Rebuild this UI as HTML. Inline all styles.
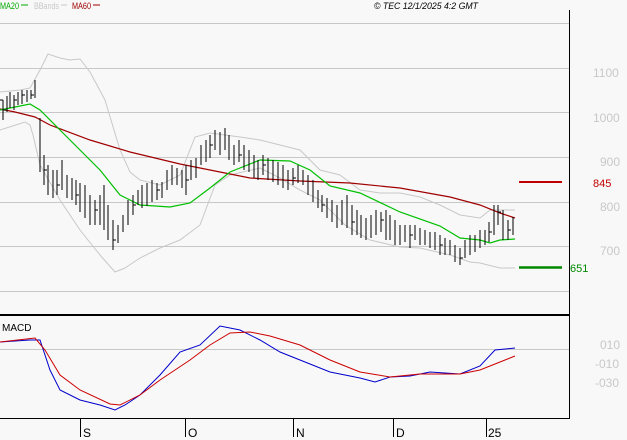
<!DOCTYPE html>
<html><head><style>
body{margin:0;background:#f8f8f8;}
svg{display:block;font-family:"Liberation Sans",sans-serif;}
</style></head><body>
<svg width="627" height="440" viewBox="0 0 627 440">
<rect width="627" height="440" fill="#f8f8f8"/>
<g stroke="#c8c8c8" stroke-width="1">
<line x1="0" y1="23.5" x2="569" y2="23.5"/>
<line x1="0" y1="68.5" x2="569" y2="68.5"/>
<line x1="0" y1="112.5" x2="569" y2="112.5"/>
<line x1="0" y1="157.5" x2="569" y2="157.5"/>
<line x1="0" y1="202.5" x2="569" y2="202.5"/>
<line x1="0" y1="246.5" x2="569" y2="246.5"/>
<line x1="0" y1="291.5" x2="569" y2="291.5"/>
<line x1="0" y1="349.5" x2="569" y2="349.5"/>
</g>
<g fill="#c8c8c8" font-size="12">
<text x="593" y="77">1100</text>
<text x="593" y="122">1000</text>
<text x="600" y="166">900</text>
<text x="600" y="211">800</text>
<text x="600" y="255">700</text>
<text x="600" y="349">010</text>
<text x="595" y="368">-010</text>
<text x="595" y="387">-030</text>
</g>
<polyline fill="none" stroke="#c8c8c8" points="0,92 20,90 30,88 40,70 48,54 60,58 70,60 80,59 90,72 105,100 120,150 130,172 140,180 160,185 180,175 195,137 210,133 240,137 260,140 280,145 300,150 320,170 340,175 360,190 380,193 400,193 420,197 440,205 460,215 480,218 490,210 500,210 515,210"/>
<polyline fill="none" stroke="#c8c8c8" points="0,130 25,122 30,125 33,135 40,165 60,200 80,230 100,255 115,272 125,268 140,258 160,248 180,240 200,225 215,185 230,175 260,168 280,178 300,190 320,200 345,225 370,240 400,247 420,248 450,255 470,262 480,263 500,268 515,268"/>
<polyline fill="none" stroke="#a00000" stroke-width="1.2" points="0,109 15,112 35,117 50,125 90,140 130,152 180,164 250,178 300,181 350,183 400,188 450,197 480,205 500,213 515,218"/>
<polyline fill="none" stroke="#00c000" stroke-width="1.2" points="0,110 30,104 40,110 60,130 80,150 100,170 120,195 140,205 170,207 190,203 210,188 230,172 260,160 290,161 310,170 330,186 360,193 400,212 440,226 460,238 480,240 490,243 500,240 515,239"/>
<path fill="none" stroke="#000" stroke-width="1" d="
M3,100V120M7,96V112M10,92V108M14,95V110M18,92V105M22,90V104M27,90V102M31,90V99M35,80V98
M40,118V172M44,155V185M48,165V195M53,170V198M57,170V195M62,160V190M67,175V198M72,178V200M76,180V205M80,183V212M85,185V218M90,195V225M95,200V225M100,195V225M104,185V230M108,205V240M113,220V250M118,225V243M123,215V232M128,200V225M133,195V215M138,190V205M142,185V208M147,183V206M152,180V202M157,183V200M162,182V198M167,170V190M172,165V185M177,168V185M182,170V188M186,165V195M191,160V180M196,158V178M201,145V165M206,140V162M210,135V158M215,130V150M220,132V155M225,128V150M229,135V160M234,145V165M239,140V162M244,145V170M249,150V172M254,155V178M258,160V180M263,155V175M268,158V180M273,160V182M278,162V185M283,165V188M288,170V190M293,168V185M298,165V183M303,170V185M308,175V195M313,180V202M318,190V208M322,195V212M327,198V218M332,200V222M337,205V228M342,200V225M347,195V228M352,205V235M357,210V235M361,215V238M366,218V240M371,215V238M376,210V235M381,212V232M386,210V240M390,215V240M395,220V245M400,225V245M405,225V242M410,225V248M415,225V240M420,228V245M425,230V245M430,232V248M435,232V250M440,235V255M445,238V255M450,240V255M455,245V262M460,248V265M465,240V258M470,235V255M475,235V252M480,230V248M485,230V245M489,222V242M494,205V235M498,205V225M503,210V240M508,220V240M513,217V235
"/>
<path fill="none" stroke="#000" d="M0,100h3M3,110h3M14,100h3M22,95h3M31,95h3M44,170h3M57,185h3M76,195h3M95,210h3M113,240h3M133,205h3M157,190h3M186,180h3M210,145h3M239,155h3M263,165h3M293,178h3M322,205h3M352,222h3M381,220h3M410,235h3M440,245h3M460,258h3M489,232h3M498,212h3M508,230h3"/>
<line x1="519" y1="182" x2="562" y2="182" stroke="#c00000" stroke-width="2"/>
<line x1="519" y1="267.5" x2="562" y2="267.5" stroke="#008800" stroke-width="2.5"/>
<text x="593" y="187" fill="#c00000" font-size="11">845</text>
<text x="570" y="272" fill="#008800" font-size="11">651</text>
<polyline fill="none" stroke="#0000cc" points="0,342 30,340 40,340 50,370 60,390 80,400 100,405 115,410 125,405 140,395 160,375 180,352 200,345 220,326 240,330 260,340 280,352 300,360 330,372 360,378 375,382 390,377 410,376 430,372 460,374 480,366 495,350 515,348"/>
<polyline fill="none" stroke="#cc0000" points="0,342 35,338 45,350 60,375 80,390 110,404 120,405 140,395 160,380 190,360 210,345 230,333 250,332 270,336 300,345 330,360 360,372 390,377 420,374 460,374 480,370 500,362 515,356"/>
<line x1="0" y1="315" x2="570" y2="315" stroke="#000" stroke-width="2"/>
<line x1="569.5" y1="10" x2="569.5" y2="419" stroke="#000"/>
<line x1="0" y1="418.5" x2="570" y2="418.5" stroke="#000"/>
<g stroke="#000"><line x1="80.5" y1="419" x2="80.5" y2="437"/><line x1="185.5" y1="419" x2="185.5" y2="437"/><line x1="293.5" y1="419" x2="293.5" y2="437"/><line x1="393.5" y1="419" x2="393.5" y2="437"/><line x1="486.5" y1="419" x2="486.5" y2="437"/></g>
<g font-size="12" fill="#000"><text x="83" y="437">S</text><text x="188" y="437">O</text><text x="296" y="437">N</text><text x="396" y="437">D</text><text x="488" y="437">25</text></g>
<g font-size="9"><text x="0" y="9" fill="#00aa00" textLength="19" lengthAdjust="spacingAndGlyphs">MA20</text><line x1="21" y1="5" x2="28" y2="5" stroke="#00aa00"/>
<text x="34" y="9" fill="#c8c8c8" textLength="25" lengthAdjust="spacingAndGlyphs">BBands</text><line x1="61" y1="5" x2="67" y2="5" stroke="#c8c8c8"/>
<text x="72" y="9" fill="#a00000" textLength="19" lengthAdjust="spacingAndGlyphs">MA60</text><line x1="93" y1="5" x2="100" y2="5" stroke="#a00000"/>
<text x="374" y="9" fill="#000" font-style="italic" textLength="104" lengthAdjust="spacingAndGlyphs">© TEC 12/1/2025 4:2 GMT</text></g>
<text x="2" y="331" font-size="10" fill="#000">MACD</text>
</svg>
</body></html>
